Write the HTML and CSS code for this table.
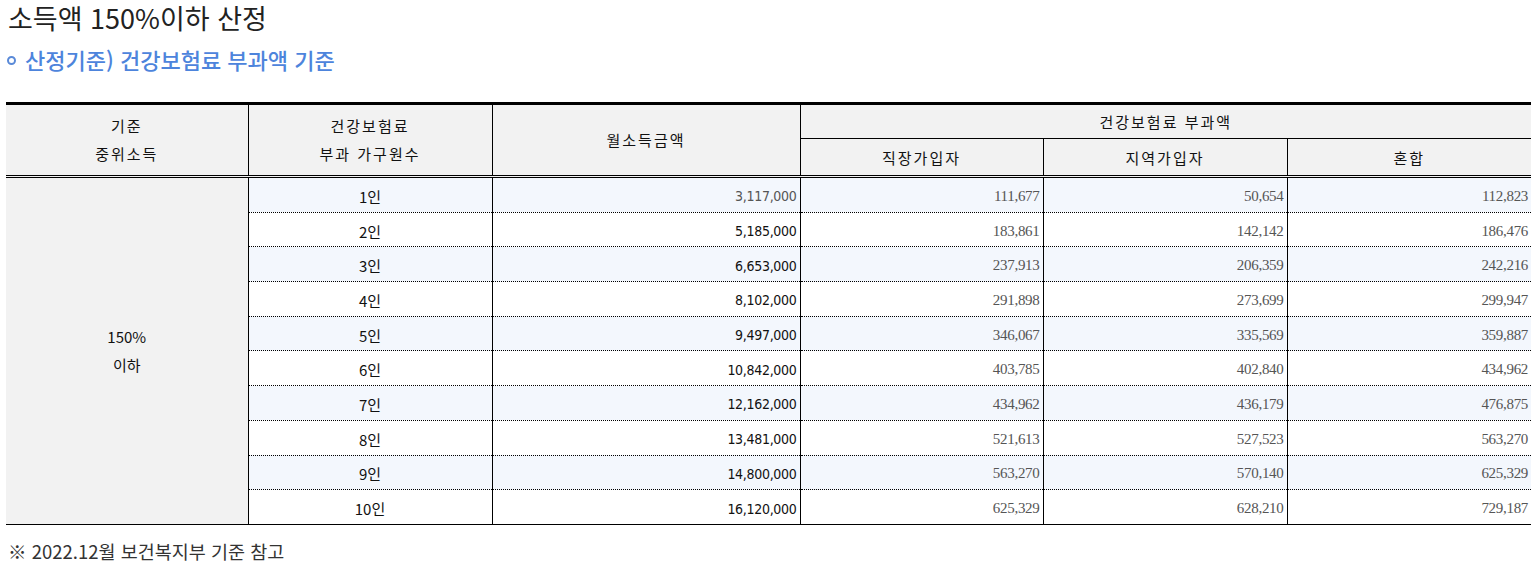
FILE: index.html
```html
<!DOCTYPE html>
<html lang="ko">
<head>
<meta charset="utf-8">
<title>소득액 150%이하 산정</title>
<link rel="stylesheet" href="styles.css">
</head>
<body>
<h1 class="title">소득액 150%이하 산정</h1>
<h2 class="subtitle"><span class="bullet"></span>산정기준) 건강보험료 부과액 기준</h2>
<table class="tbl">
  <colgroup>
    <col style="width:242px"><col style="width:244px"><col style="width:308px">
    <col style="width:243px"><col style="width:244px"><col style="width:244px">
  </colgroup>
  <thead>
    <tr class="h1row">
      <th rowspan="2" class="first">기준<br>중위소득</th>
      <th rowspan="2">건강보험료<br>부과 가구원수</th>
      <th rowspan="2">월소득금액</th>
      <th colspan="3" class="last">건강보험료 부과액</th>
    </tr>
    <tr class="h2row">
      <th>직장가입자</th>
      <th>지역가입자</th>
      <th class="last">혼합</th>
    </tr>
  </thead>
  <tbody>
    <tr class="odd"><td rowspan="10" class="group">150%<br>이하</td><td class="n">1인</td><td class="inc gray">3,117,000</td><td class="v">111,677</td><td class="v">50,654</td><td class="v last">112,823</td></tr>
    <tr><td class="n">2인</td><td class="inc">5,185,000</td><td class="v">183,861</td><td class="v">142,142</td><td class="v last">186,476</td></tr>
    <tr class="odd"><td class="n">3인</td><td class="inc">6,653,000</td><td class="v">237,913</td><td class="v">206,359</td><td class="v last">242,216</td></tr>
    <tr><td class="n">4인</td><td class="inc">8,102,000</td><td class="v">291,898</td><td class="v">273,699</td><td class="v last">299,947</td></tr>
    <tr class="odd"><td class="n">5인</td><td class="inc">9,497,000</td><td class="v">346,067</td><td class="v">335,569</td><td class="v last">359,887</td></tr>
    <tr><td class="n">6인</td><td class="inc">10,842,000</td><td class="v">403,785</td><td class="v">402,840</td><td class="v last">434,962</td></tr>
    <tr class="odd"><td class="n">7인</td><td class="inc">12,162,000</td><td class="v">434,962</td><td class="v">436,179</td><td class="v last">476,875</td></tr>
    <tr><td class="n">8인</td><td class="inc">13,481,000</td><td class="v">521,613</td><td class="v">527,523</td><td class="v last">563,270</td></tr>
    <tr class="odd"><td class="n">9인</td><td class="inc">14,800,000</td><td class="v">563,270</td><td class="v">570,140</td><td class="v last">625,329</td></tr>
    <tr class="lastrow"><td class="n">10인</td><td class="inc">16,120,000</td><td class="v">625,329</td><td class="v">628,210</td><td class="v last">729,187</td></tr>
  </tbody>
</table>
<p class="note">※ 2022.12월 보건복지부 기준 참고</p>
</body>
</html>
```
FILE: styles.css
```css
html, body {
  margin: 0;
  padding: 0;
  background: #fff;
}
body {
  padding: 0 8px 0 6px;
  font-family: "Noto Sans CJK KR", "Noto Sans", sans-serif;
  color: #222;
}
.title {
  margin: 0 0 0 2px;
  font-size: 27px;
  line-height: 36px;
  font-weight: 400;
  color: #222;
}
.subtitle {
  margin: 8px 0 28px 1px;
  font-size: 22px;
  line-height: 30px;
  font-weight: 500;
  color: #4d84dc;
  display: flex;
  align-items: center;
}
.bullet {
  display: inline-block;
  width: 5px;
  height: 5px;
  border: 2px solid #5a8ad8;
  border-radius: 50%;
  margin-right: 9px;
  margin-top: 2px;
}
.tbl {
  border-collapse: collapse;
  table-layout: fixed;
  width: 1525px;
  border-top: 3px solid #000;
  font-size: 14px;
  color: #111;
}
.tbl th {
  background: #f2f2f2;
  font-weight: 400;
  font-size: 15px;
  font-family: "Noto Sans CJK KR", sans-serif;
  letter-spacing: 2px;
  border-left: 1px solid #000;
  border-right: 1px solid #000;
  border-bottom: 1px solid #000;
  padding: 0;
  text-align: center;
  line-height: 28px;
}
.tbl th.first { border-left: none; }
.tbl th.last { border-right: none; }
.tbl .h1row th { height: 33px; }
.tbl .h2row th { height: 34px; padding-top: 2px; }
.tbl thead tr:last-child th,
.tbl thead th[rowspan] {
  border-bottom: 3px double #000;
}
.tbl td {
  border-left: 1px solid #000;
  border-right: 1px solid #000;
  border-bottom: 1px dotted #000;
  padding: 3px 3px 0;
  height: 30.7px;
  background: #fff;
  font-size: 15px;
}
.tbl tr.odd td { background: #f3f7fd; }
.tbl td.group {
  border-left: none;
  background: #f2f2f2 !important;
  text-align: center;
  line-height: 28px;
  border-bottom: 1.5px solid #000;
  padding: 0;
  color: #111;
}
.tbl td.last { border-right: none; }
.tbl tr.lastrow td { border-bottom: 1.5px solid #000; }
.tbl td.n {
  text-align: center;
  color: #111;
}
.tbl td.inc {
  text-align: right;
  font-family: "DejaVu Sans Condensed", "Liberation Sans", sans-serif;
  font-size: 14px;
  color: #111;
  letter-spacing: -0.3px;
}
.tbl td.inc.gray { color: #555; }
.tbl td.v {
  text-align: right;
  font-family: "Liberation Serif", serif;
  font-size: 15px;
  color: #555;
  letter-spacing: -0.3px;
}
.note {
  margin: 13px 0 0 2px;
  font-size: 18.5px;
  line-height: 26px;
  color: #333;
}
```
